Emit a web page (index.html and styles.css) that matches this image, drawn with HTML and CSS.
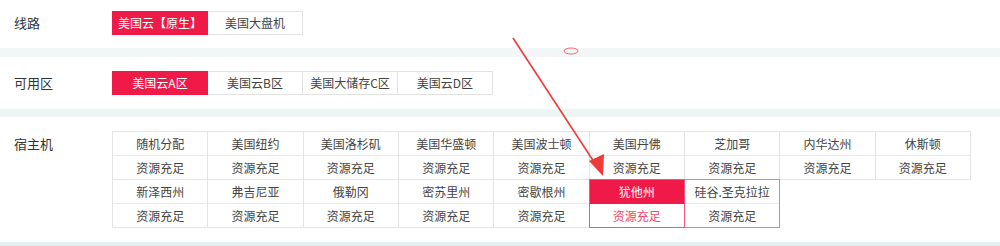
FILE: index.html
```html
<!DOCTYPE html>
<html lang="zh">
<head>
<meta charset="utf-8">
<link rel="stylesheet" href="styles.css">
</head>
<body>
<div class="page">
  <div class="section s1">
    <div class="label">线路</div>
    <div class="group">
      <span class="btn active">美国云【原生】</span>
      <span class="btn">美国大盘机</span>
    </div>
  </div>
  <div class="band b1"></div>
  <div class="section s2">
    <div class="label">可用区</div>
    <div class="group">
      <span class="btn active">美国云A区</span>
      <span class="btn">美国云B区</span>
      <span class="btn">美国大储存C区</span>
      <span class="btn">美国云D区</span>
    </div>
  </div>
  <div class="band b2"></div>
  <div class="section s3">
    <div class="label host-label">宿主机</div>
    <div class="hosts">
      <div class="host"><div class="name">随机分配</div><div class="stat">资源充足</div></div>
      <div class="host"><div class="name">美国纽约</div><div class="stat">资源充足</div></div>
      <div class="host"><div class="name">美国洛杉矶</div><div class="stat">资源充足</div></div>
      <div class="host"><div class="name">美国华盛顿</div><div class="stat">资源充足</div></div>
      <div class="host"><div class="name">美国波士顿</div><div class="stat">资源充足</div></div>
      <div class="host"><div class="name">美国丹佛</div><div class="stat">资源充足</div></div>
      <div class="host"><div class="name">芝加哥</div><div class="stat">资源充足</div></div>
      <div class="host"><div class="name">内华达州</div><div class="stat">资源充足</div></div>
      <div class="host"><div class="name">休斯顿</div><div class="stat">资源充足</div></div>
      <div class="host"><div class="name">新泽西州</div><div class="stat">资源充足</div></div>
      <div class="host"><div class="name">弗吉尼亚</div><div class="stat">资源充足</div></div>
      <div class="host"><div class="name">俄勒冈</div><div class="stat">资源充足</div></div>
      <div class="host"><div class="name">密苏里州</div><div class="stat">资源充足</div></div>
      <div class="host"><div class="name">密歇根州</div><div class="stat">资源充足</div></div>
      <div class="host selected"><div class="name">犹他州</div><div class="stat">资源充足</div></div>
      <div class="host hovered"><div class="name">硅谷.圣克拉拉</div><div class="stat">资源充足</div></div>
    </div>
  </div>
  <div class="band b3"></div>

  <svg class="annot" width="1000" height="246" viewBox="0 0 1000 246">
    <ellipse cx="571" cy="51" rx="7" ry="3" fill="none" stroke="#f26a78" stroke-width="1"/>
    <line x1="513" y1="38" x2="596" y2="165" stroke="#f03a3a" stroke-width="1.6"/>
    <polygon points="603,176 589,161 604,154" fill="#f03a3a"/>
  </svg>
</div>
</body>
</html>
```

FILE: styles.css
```css
html, body {
  margin: 0;
  padding: 0;
  background: #ffffff;
}
.page {
  position: relative;
  width: 1000px;
  height: 246px;
  overflow: hidden;
  font-family: "Microsoft YaHei", "Noto Sans CJK SC", sans-serif;
  color: #333;
}
.section {
  display: flex;
  align-items: flex-start;
}
.s1 { padding: 11px 0 13px 0; }
.s2 { padding: 14px 0 14px 0; }
.s3 { padding: 14px 0 0 0; height: 111px; }
.label {
  width: 98px;
  padding-left: 14px;
  font-size: 13px;
  line-height: 24px;
  color: #333;
}
.host-label { margin-top: 1px; }
.group {
  display: flex;
}
.btn {
  box-sizing: border-box;
  width: 96px;
  height: 24px;
  line-height: 22px;
  font-size: 12px;
  text-align: center;
  border: 1px solid #e2e2e2;
  margin-left: -1px;
  color: #444;
  background: #fff;
}
.btn:first-child { margin-left: 0; }
.btn.active {
  background: #f01a48;
  border-color: #f01a48;
  color: #fff;
  position: relative;
}
.band { height: 9px; }
.b1 { background: #f3f6f6; }
.b2 { height: 8px; background: #eef5f5; }
.b3 { height: 10px; background: #e4f1f1; }
.hosts {
  display: grid;
  grid-template-columns: repeat(9, 95.33px);
  padding: 1px 0 0 1px;
}
.host {
  box-sizing: border-box;
  margin: -1px 0 0 -1px;
  border: 1px solid #e4e4e4;
  width: 96.33px;
  font-size: 12px;
  text-align: center;
  color: #444;
  background: #fff;
}
.name, .stat {
  height: 23px;
  line-height: 23px;
}
.name { border-bottom: 1px solid #e8e8e8; }
.host.hovered {
  position: relative;
  border-color: #f27a95;
}
.host.selected {
  position: relative;
  z-index: 1;
  border-color: #f2577a;
}
.host.selected .name {
  background: #f01a48;
  color: #fff;
  border-bottom-color: #f01a48;
}
.host.selected .stat {
  color: #f2456c;
}
.annot {
  position: absolute;
  left: 0;
  top: 0;
  pointer-events: none;
}
```
